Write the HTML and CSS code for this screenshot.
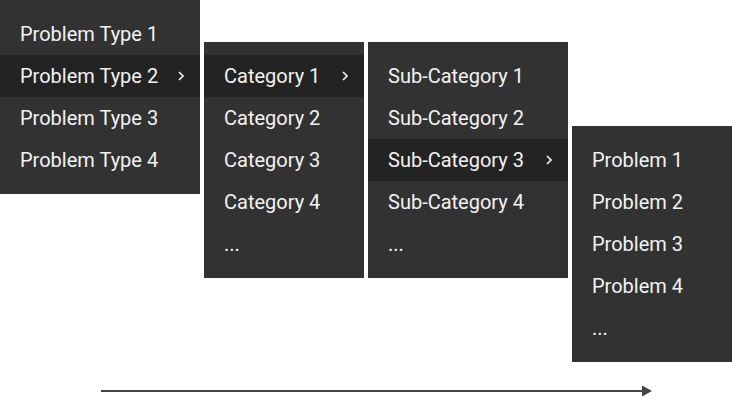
FILE: index.html
```html
<!DOCTYPE html>
<html lang="en">
<head>
  <meta charset="UTF-8">
  <meta name="viewport" content="width=device-width, initial-scale=1.0">
  <title>Cascading Menu</title>
  <link rel="stylesheet" href="styles.css">
</head>
<body>
  <div class="menus">
    <ul class="menu menu-ancho nivel-1">
      <li class="item">Problem Type 1</li>
      <li class="item activo">Problem Type 2
        <svg class="chevron" viewBox="0 0 6 10" width="6" height="10"><polyline points="1,1 5,5 1,9"/></svg>
      </li>
      <li class="item">Problem Type 3</li>
      <li class="item">Problem Type 4</li>
    </ul>

    <ul class="menu menu-corto nivel-2">
      <li class="item activo">Category 1
        <svg class="chevron" viewBox="0 0 6 10" width="6" height="10"><polyline points="1,1 5,5 1,9"/></svg>
      </li>
      <li class="item">Category 2</li>
      <li class="item">Category 3</li>
      <li class="item">Category 4</li>
      <li class="item">...</li>
    </ul>

    <ul class="menu menu-ancho nivel-2">
      <li class="item">Sub-Category 1</li>
      <li class="item">Sub-Category 2</li>
      <li class="item activo">Sub-Category 3
        <svg class="chevron" viewBox="0 0 6 10" width="6" height="10"><polyline points="1,1 5,5 1,9"/></svg>
      </li>
      <li class="item">Sub-Category 4</li>
      <li class="item">...</li>
    </ul>

    <ul class="menu menu-corto nivel-4">
      <li class="item">Problem 1</li>
      <li class="item">Problem 2</li>
      <li class="item">Problem 3</li>
      <li class="item">Problem 4</li>
      <li class="item">...</li>
    </ul>
  </div>

  <svg class="flecha" width="552" height="12" viewBox="0 0 552 12">
    <line x1="0" y1="6" x2="542" y2="6"/>
    <polygon points="541,0.5 551,6 541,11.5"/>
  </svg>
</body>
</html>
```

FILE: styles.css
```css
body {
  margin: 0;
  padding: 0;
  background: #fff;
  font-family: 'Roboto', sans-serif;
}

.menus {
  display: flex;
  align-items: flex-start;
  gap: 4px;
}

.menu {
  list-style: none;
  margin: 0;
  padding: 13px 0;
  background: #323232;
  color: #f2f2f2;
}

.menu-ancho {
  width: 200px;
}

.menu-corto {
  width: 160px;
}

.nivel-2 {
  margin-top: 42px;
}

.nivel-4 {
  margin-top: 126px;
}

.item {
  display: flex;
  align-items: center;
  justify-content: space-between;
  height: 42px;
  padding: 0 16px 0 20px;
  font-size: 20px;
}

.activo {
  background: #232323;
}

.chevron {
  fill: none;
  stroke: #f2f2f2;
  stroke-width: 1.6;
}

.flecha {
  display: block;
  margin: 23px 0 0 101px;
}

.flecha line {
  stroke: #444;
  stroke-width: 2;
}

.flecha polygon {
  fill: #444;
}
```
